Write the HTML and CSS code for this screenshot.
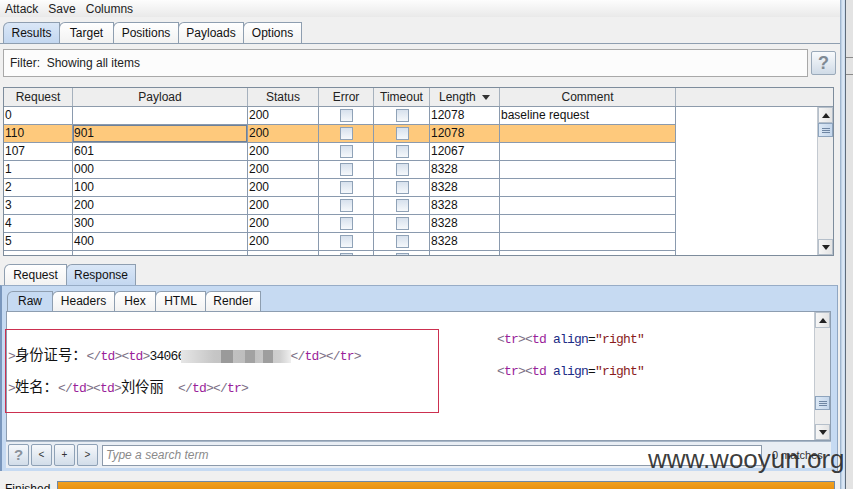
FILE: index.html
```html
<!DOCTYPE html>
<html>
<head>
<meta charset="utf-8">
<title>Intruder attack</title>
<link rel="stylesheet" href="styles.css">
</head>
<body>
<div class="app">
  <div class="main">
    <div class="menubar"><span>Attack</span><span>Save</span><span>Columns</span></div>
    <div class="tabrow">
      <div class="tab sel" style="width:57px">Results</div>
      <div class="tab" style="width:55px">Target</div>
      <div class="tab" style="width:66px">Positions</div>
      <div class="tab" style="width:66px">Payloads</div>
      <div class="tab" style="width:59px">Options</div>
    </div>
    <div class="results">
      <div class="filterrow">
        <div class="filter">Filter:&nbsp; Showing all items</div>
        <div class="helpbtn">?</div>
      </div>
      <div class="tablebox">
        <div class="thead">
          <div class="th c1">Request</div>
          <div class="th c2">Payload</div>
          <div class="th c3">Status</div>
          <div class="th c4">Error</div>
          <div class="th c5">Timeout</div>
          <div class="th c6">Length <span class="sortarrow"></span></div>
          <div class="th c7">Comment</div>
          <div class="th filler"></div>
        </div>
        <div class="tbody">
          <div class="rows">
            <div class="row"><div class="td c1">0</div><div class="td c2"></div><div class="td c3">200</div><div class="td c4"><span class="cb"></span></div><div class="td c5"><span class="cb"></span></div><div class="td c6">12078</div><div class="td c7">baseline request</div></div>
            <div class="row selrow"><div class="td c1">110</div><div class="td c2 focus">901</div><div class="td c3">200</div><div class="td c4"><span class="cb"></span></div><div class="td c5"><span class="cb"></span></div><div class="td c6">12078</div><div class="td c7"></div></div>
            <div class="row"><div class="td c1">107</div><div class="td c2">601</div><div class="td c3">200</div><div class="td c4"><span class="cb"></span></div><div class="td c5"><span class="cb"></span></div><div class="td c6">12067</div><div class="td c7"></div></div>
            <div class="row"><div class="td c1">1</div><div class="td c2">000</div><div class="td c3">200</div><div class="td c4"><span class="cb"></span></div><div class="td c5"><span class="cb"></span></div><div class="td c6">8328</div><div class="td c7"></div></div>
            <div class="row"><div class="td c1">2</div><div class="td c2">100</div><div class="td c3">200</div><div class="td c4"><span class="cb"></span></div><div class="td c5"><span class="cb"></span></div><div class="td c6">8328</div><div class="td c7"></div></div>
            <div class="row"><div class="td c1">3</div><div class="td c2">200</div><div class="td c3">200</div><div class="td c4"><span class="cb"></span></div><div class="td c5"><span class="cb"></span></div><div class="td c6">8328</div><div class="td c7"></div></div>
            <div class="row"><div class="td c1">4</div><div class="td c2">300</div><div class="td c3">200</div><div class="td c4"><span class="cb"></span></div><div class="td c5"><span class="cb"></span></div><div class="td c6">8328</div><div class="td c7"></div></div>
            <div class="row"><div class="td c1">5</div><div class="td c2">400</div><div class="td c3">200</div><div class="td c4"><span class="cb"></span></div><div class="td c5"><span class="cb"></span></div><div class="td c6">8328</div><div class="td c7"></div></div>
            <div class="row"><div class="td c1"></div><div class="td c2"></div><div class="td c3"></div><div class="td c4"><span class="cb"></span></div><div class="td c5"><span class="cb"></span></div><div class="td c6"></div><div class="td c7"></div></div>
          </div>
          <div class="vs">
            <div class="sbtn"><span class="up"></span></div>
            <div class="thumb t1"><span class="grip"></span></div>
            <div class="track"></div>
            <div class="sbtn"><span class="down"></span></div>
          </div>
        </div>
      </div>
    </div>
    <div class="rrtabs">
      <div class="tab" style="width:63px">Request</div>
      <div class="tab sel" style="width:70px">Response</div>
    </div>
    <div class="resp">
      <div class="subtabs">
        <div class="tab sub sel" style="width:46px">Raw</div>
        <div class="tab sub" style="width:63px">Headers</div>
        <div class="tab sub" style="width:42px">Hex</div>
        <div class="tab sub" style="width:51px">HTML</div>
        <div class="tab sub" style="width:56px">Render</div>
      </div>
      <div class="editor">
        <div class="code">
          <div class="redbox">
            <div class="line"><span class="b">&gt;</span><span class="cn">身份证号：</span><span class="b">&lt;/</span><span class="t">td</span><span class="b">&gt;&lt;</span><span class="t">td</span><span class="b">&gt;</span>34066<span class="blur"></span><span class="b">&lt;/</span><span class="t">td</span><span class="b">&gt;&lt;/</span><span class="t">tr</span><span class="b">&gt;</span></div>
            <div class="line"><span class="b">&gt;</span><span class="cn">姓名：</span><span class="b">&lt;/</span><span class="t">td</span><span class="b">&gt;&lt;</span><span class="t">td</span><span class="b">&gt;</span><span class="cn">刘伶丽</span>&nbsp;&nbsp;<span class="b">&lt;/</span><span class="t">td</span><span class="b">&gt;&lt;/</span><span class="t">tr</span><span class="b">&gt;</span></div>
          </div>
          <div class="rightcol">
            <div class="line"><span class="b">&lt;</span><span class="t">tr</span><span class="b">&gt;&lt;</span><span class="t">td</span> <span class="a">align</span>=<span class="v">"right"</span></div>
            <div class="line"><span class="b">&lt;</span><span class="t">tr</span><span class="b">&gt;&lt;</span><span class="t">td</span> <span class="a">align</span>=<span class="v">"right"</span></div>
          </div>
        </div>
        <div class="vs vs2">
          <div class="sbtn"><span class="up"></span></div>
          <div class="track"></div>
          <div class="thumb t2"><span class="grip"></span></div>
          <div class="track small"></div>
          <div class="sbtn"><span class="down"></span></div>
        </div>
      </div>
      <div class="searchrow">
        <div class="sqbtn q">?</div>
        <div class="sqbtn">&lt;</div>
        <div class="sqbtn">+</div>
        <div class="sqbtn">&gt;</div>
        <div class="search">Type a search term</div>
        <div class="matches">0 matches</div>
      </div>
    </div>
    <div class="status">
      <div class="fin">Finished</div>
      <div class="progress"></div>
    </div>
  </div>
  <div class="frame">
    <div class="fin1"></div>
    <div class="fedge"></div>
    <div class="other"><div class="oline"></div><div class="oline l2"></div></div>
  </div>
</div>
<div class="watermark">www.wooyun.org</div>
</body>
</html>
```

FILE: styles.css
```css
* { box-sizing: border-box; margin: 0; padding: 0; }
html, body { width: 853px; height: 489px; overflow: hidden; }
body {
  font-family: "Liberation Sans", Arial, sans-serif;
  font-size: 12px;
  color: #1a1a1a;
  background: #f0f0f0;
  position: relative;
}
.app { display: flex; height: 489px; }
.main { width: 840px; display: flex; flex-direction: column; background: #f0f0f0; flex-shrink: 0; }

/* menu */
.menubar {
  height: 17px; flex-shrink: 0;
  display: flex; align-items: center; gap: 10px;
  padding-left: 5px;
  background: linear-gradient(#fdfdfd, #e9e9e9);
  font-size: 12px; color: #222;
}

/* tabs */
.tabrow, .rrtabs {
  height: 26px; flex-shrink: 0;
  display: flex; align-items: flex-end;
  padding-left: 3px;
}
.rrtabs { height: 28px; padding-left: 4px; }
.tab {
  height: 21px;
  border: 1px solid #8e9eb0; border-bottom: none;
  border-top-left-radius: 6px;
  margin-right: -1px;
  background: linear-gradient(#ffffff, #f2f2f2);
  text-align: center; line-height: 20px;
  font-size: 12px; color: #111;
}
.tab.sel { background: linear-gradient(#dae7f7, #c3d7f0); position: relative; z-index: 1; }

/* results */
.results {
  height: 214px; flex-shrink: 0;
  border-top: 1px solid #8e9eb0;
  padding: 5px 0 0 3px;
}
.filterrow { display: flex; height: 28px; }
.filter {
  width: 805px; height: 28px;
  border: 1px solid #a8a8a8;
  background: #fcfcfc;
  padding-left: 6px; line-height: 26px;
  font-size: 12px; color: #222;
}
.helpbtn {
  width: 25px; height: 24px;
  margin: 2px 0 0 3px;
  border: 1px solid #9aa9b9; border-radius: 2px;
  background: linear-gradient(#f8fafc, #d0dbe7);
  text-align: center; line-height: 22px;
  font-size: 18px; font-weight: bold; color: #808a94;
}
.tablebox {
  margin-top: 10px;
  width: 831px; height: 169px;
  border: 1px solid #7d8c9c;
  background: #fff;
  display: flex; flex-direction: column;
}
.thead {
  height: 19px; flex-shrink: 0; display: flex;
  background: #eeeeee;
  border-bottom: 1px solid #8d9bab;
}
.th {
  border-right: 1px solid #a6b1bd;
  text-align: center; line-height: 18px;
  font-size: 12px; color: #222;
}
.th.filler { flex: 1; border-right: none; }
.c1 { width: 69px; } .c2 { width: 175px; } .c3 { width: 71px; }
.c4 { width: 55px; } .c5 { width: 56px; } .c6 { width: 70px; } .c7 { width: 176px; }
.sortarrow {
  display: inline-block; width: 0; height: 0;
  border-left: 4px solid transparent; border-right: 4px solid transparent;
  border-top: 5px solid #333;
  vertical-align: middle; margin-left: 3px;
}
.tbody { flex: 1; display: flex; overflow: hidden; }
.rows { width: 813px; overflow: hidden; }
.row { display: flex; width: 672px; height: 18px; }
.td {
  height: 18px; flex-shrink: 0;
  border-right: 1px solid #8a9aae; border-bottom: 1px solid #8a9aae;
  padding-left: 1px; line-height: 17px;
  font-size: 12px; color: #111;
  display: flex; align-items: center;
}
.td.c4, .td.c5 { justify-content: center; }
.selrow { background: #fec97c; }
.selrow .td.focus { box-shadow: inset 0 0 0 1px #6d8098; }
.cb {
  width: 13px; height: 13px;
  border: 1px solid #8fa2b7;
  background: linear-gradient(#d7e1ed, #f5f8fb);
}

/* scrollbars */
.vs {
  width: 16px; display: flex; flex-direction: column;
  background: #ececec; border-left: 1px solid #c3c9d0;
}
.sbtn {
  height: 16px; flex-shrink: 0;
  display: flex; align-items: center; justify-content: center;
  background: linear-gradient(to right, #f6f6f6, #e4e4e4);
  border: 1px solid #b5bfca;
}
.up, .down {
  width: 0; height: 0;
  border-left: 4px solid transparent; border-right: 4px solid transparent;
}
.up { border-bottom: 5px solid #222; }
.down { border-top: 5px solid #222; }
.thumb {
  height: 14px; flex-shrink: 0;
  border: 1px solid #8ea4bd;
  background: linear-gradient(to right, #dce8f5, #c5d7ec);
  display: flex; align-items: center; justify-content: center;
}
.grip {
  width: 8px; height: 5px;
  border-top: 1px solid #6f86a3; border-bottom: 1px solid #6f86a3;
  background: linear-gradient(transparent 1px, #6f86a3 1px, #6f86a3 2px, transparent 2px);
}
.track { flex: 1; background: #ededed; }
.track.small { flex: 0 0 14px; }

/* response panel */
.resp {
  height: 186px; flex-shrink: 0;
  margin-right: 2px;
  background: #c6daf2;
  border-top: 1px solid #97acc6;
  border-left: 2px solid #7a97bd;
  border-right: 1px solid #8fa6c2;
  padding: 5px 6px 3px 4px;
  display: flex; flex-direction: column;
}
.subtabs { height: 20px; display: flex; align-items: flex-end; padding-left: 1px; flex-shrink: 0; }
.tab.sub { height: 20px; line-height: 19px; }
.tab.sub.sel { background: #c6daf2; }
.editor {
  height: 130px; flex-shrink: 0;
  border: 1px solid #8d9db0;
  background: #fff;
  display: flex;
}
.code {
  flex: 1; display: flex; align-items: flex-start;
  font-family: "Liberation Mono", "Noto Sans CJK SC", monospace;
  font-size: 13px; letter-spacing: -0.8px; color: #111;
}
.line { height: 32px; line-height: 32px; white-space: nowrap; }
.redbox {
  margin: 17px 0 0 -2px;
  width: 434px; height: 84px;
  border: 1px solid #cc3050;
  padding: 8px 0 0 2px;
}
.rightcol { margin: 12px 0 0 58px; }
.cn { font-family: "Noto Sans CJK SC", sans-serif; font-size: 14.3px; letter-spacing: 0; color: #111; }
.b { color: #7b6f85; }
.t { color: #9a1f9a; }
.a { color: #1c2c86; }
.v { color: #8a1c1c; }
.blur {
  display: inline-block; vertical-align: middle;
  width: 110px; height: 13px; margin-left: -4px;
  background:
    linear-gradient(to right, transparent 0 40px, #9a9a9a 40px 52px, transparent 52px 64px, #a2a2a2 64px 74px, transparent 74px 82px, #9e9e9e 82px 92px, transparent 92px),
    linear-gradient(to right, #e6e6e6, #c6c6c6 30%, #bdbdbd 60%, #d0d0d0 90%, #efefef);
}
.vs2 { border-left: 1px solid #c3c9d0; }

.searchrow {
  height: 27px; flex-shrink: 0;
  border-top: 1px solid #a7b6c7;
  background: #e9eef4;
  display: flex; align-items: center;
  padding-left: 2px;
}
.sqbtn {
  width: 21px; height: 22px; margin-right: 2px;
  border: 1px solid #8ea1b6; border-radius: 2px;
  background: linear-gradient(#f6f8fb, #d2dde9);
  text-align: center; line-height: 20px;
  font-size: 10px; color: #333;
}
.sqbtn.q { font-size: 15px; font-weight: bold; color: #8a939c; }
.search {
  width: 660px; height: 21px; margin-left: 2px;
  border: 1px solid #8c9aab; background: #fff;
  padding-left: 3px; line-height: 19px;
  font-style: italic; color: #8a8a8a; font-size: 12px;
}
.matches { margin-left: 10px; font-size: 11px; color: #333; }

.status {
  height: 19px; flex-shrink: 0;
  display: flex; align-items: flex-start;
  padding: 10px 0 0 5px;
}
.fin { width: 52px; font-size: 12px; line-height: 14px; margin-top: 1px; color: #111; }
.progress {
  width: 778px; height: 12px;
  border: 1px solid #6f88a6;
  background: linear-gradient(#f0a020, #e88c08);
}

/* right window frame */
.frame { flex: 1; display: flex; }
.fin1 { width: 5px; background: linear-gradient(to right, #b3c8df, #e2ecf7 50%, #c5d8ee); border-left: 1px solid #9fb5cd; }
.fedge { width: 1px; background: #5e6b79; }
.other { flex: 1; background: #e3e3e3; padding-top: 57px; }
.oline { height: 1px; background: #8a8a8a; }
.oline.l2 { margin-top: 16px; }

.watermark {
  position: absolute; left: 648px; top: 444px;
  font-family: "Liberation Sans", Arial, sans-serif;
  font-size: 26px; color: rgba(35, 35, 35, 0.88);
  white-space: nowrap;
}
```
